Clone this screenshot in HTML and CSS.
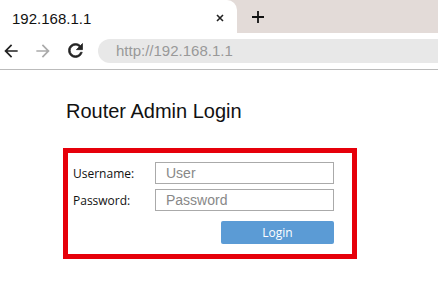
FILE: index.html
```html
<!DOCTYPE html>
<html lang="en">
<head>
  <meta charset="UTF-8" />
  <meta name="viewport" content="width=device-width, initial-scale=1.0" />
  <title>192.168.1.1</title>
  <link rel="stylesheet" href="styles.css">
</head>
<body>
  <div class="tabstrip">
    <div class="tab">
      <span class="tab-title">192.168.1.1</span>
      <svg class="tab-close" width="8" height="8" viewBox="0 0 8 8">
        <path d="M1 1L7 7M7 1L1 7" stroke="#222" stroke-width="1.6" />
      </svg>
    </div>
    <svg class="new-tab" width="12" height="12" viewBox="0 0 12 12">
      <path d="M6 0V12M0 6H12" stroke="#111" stroke-width="1.8" />
    </svg>
  </div>

  <div class="toolbar">
    <svg class="nav-btn" width="20" height="20" viewBox="0 0 24 24">
      <path d="M20 11H7.83l5.59-5.59L12 4l-8 8 8 8 1.41-1.41L7.83 13H20v-2z" fill="#222" />
    </svg>
    <svg class="nav-btn" width="20" height="20" viewBox="0 0 24 24">
      <path d="M4 11h12.17l-5.59-5.59L12 4l8 8-8 8-1.41-1.41L16.17 13H4v-2z" fill="#aaa" />
    </svg>
    <svg class="nav-btn" width="21" height="21" viewBox="0 0 24 24">
      <path d="M17.65 6.35C16.2 4.9 14.21 4 12 4c-4.42 0-7.99 3.58-7.99 8s3.57 8 7.99 8c3.73 0 6.84-2.55 7.73-6h-2.08c-.82 2.33-3.04 4-5.65 4-3.31 0-6-2.69-6-6s2.69-6 6-6c1.66 0 3.14.69 4.22 1.78L13 11h7V4l-2.35 2.35z" fill="#222" stroke="#222" stroke-width="0.8" />
    </svg>
    <div class="omnibox">http://192.168.1.1</div>
  </div>

  <div class="page">
    <h1>Router Admin Login</h1>
    <form class="login-box" onsubmit="return false;">
      <label for="user">Username:</label>
      <input type="text" id="user" placeholder="User" />
      <label for="pass">Password:</label>
      <input type="password" id="pass" placeholder="Password" />
      <button type="submit">Login</button>
    </form>
  </div>
</body>
</html>
```

FILE: styles.css
```css
* { box-sizing: border-box; }

body {
  margin: 0;
  background: #fff;
  color: #111;
  font-family: "Liberation Sans", Arial, sans-serif;
  overflow: hidden;
}

.tabstrip {
  height: 33px;
  background: #e3dbd8;
  display: flex;
  align-items: center;
}

.tab {
  width: 237px;
  height: 33px;
  background: #fff;
  border-top-right-radius: 10px;
  display: flex;
  align-items: center;
  padding: 3px 13px 0 12px;
}

.tab-title {
  flex: 1;
  font-size: 15px;
  color: #111;
}

.new-tab {
  margin-left: 15px;
}

.toolbar {
  height: 37px;
  display: flex;
  align-items: center;
  gap: 12px;
  padding: 0 0 1px 1px;
  border-bottom: 1px solid #bbb;
}

.nav-btn {
  flex: none;
}

.omnibox {
  flex: 1;
  height: 24px;
  margin-left: 0;
  background: #e8e8e8;
  border-radius: 12px 0 0 12px;
  padding-left: 18px;
  display: flex;
  align-items: center;
  font-size: 15px;
  color: #999;
}

.page {
  padding: 30px 0 0 66px;
}

h1 {
  margin: 0;
  font-size: 20px;
  font-weight: normal;
  line-height: 23px;
  color: #111;
}

.login-box {
  margin: 25px 0 0 -3px;
  width: 294px;
  border: 5px solid #e6000a;
  padding: 9px 18px 10px 5px;
  display: grid;
  grid-template-columns: 82px 179px;
  row-gap: 5px;
  align-items: center;
}

.login-box label {
  font-family: "Open Sans", sans-serif;
  font-size: 12px;
  color: #111;
}

.login-box input {
  height: 22px;
  border: 1px solid #aaa;
  padding: 0 10px;
  font-family: "Liberation Sans", Arial, sans-serif;
  font-size: 14px;
}

.login-box input::placeholder {
  color: #888;
}

.login-box button {
  grid-column: 2;
  justify-self: end;
  width: 113px;
  height: 23px;
  margin-top: 5px;
  border: none;
  border-radius: 2px;
  background: #5b9bd5;
  color: #fff;
  font-family: "Open Sans", sans-serif;
  font-size: 12px;
}
```
